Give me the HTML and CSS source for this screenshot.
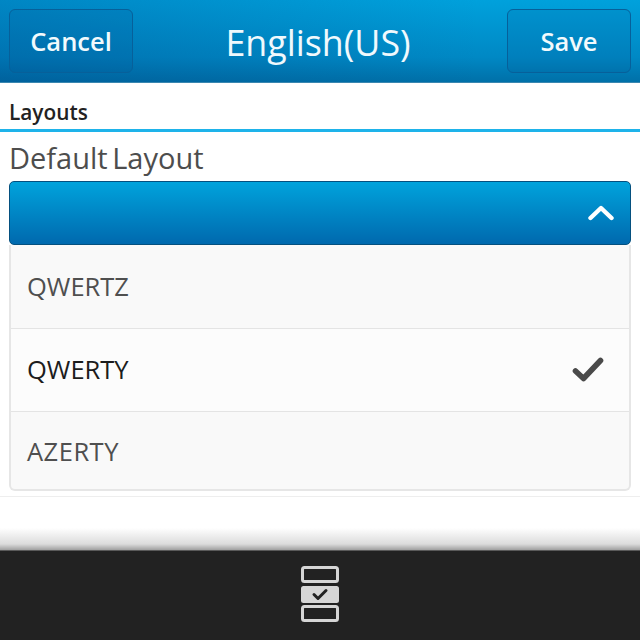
FILE: index.html
```html
<!DOCTYPE html>
<html lang="en">
<head>
<meta charset="utf-8">
<title>English(US)</title>
<link rel="stylesheet" href="styles.css">
</head>
<body>
<div class="screen">
  <header class="titlebar">
    <button class="tb-btn">Cancel</button>
    <h1 class="title">English(US)</h1>
    <button class="tb-btn">Save</button>
  </header>
  <main class="content">
    <div class="section-head">Layouts</div>
    <div class="field-label">Default Layout</div>
    <div class="dropdown-head">
      <svg class="chevron" width="26" height="16" viewBox="0 0 26 16"><path d="M2.5 13 L13 3 L23.5 13" fill="none" stroke="#fff" stroke-width="4.4" stroke-linecap="round" stroke-linejoin="round"/></svg>
    </div>
    <ul class="options">
      <li class="option first">QWERTZ</li>
      <li class="option selected">QWERTY
        <svg class="check" width="32" height="26" viewBox="0 0 32 26"><path d="M3.5 14 L11.5 21.5 L28.5 3.5" fill="none" stroke="#4a4a4a" stroke-width="5.6" stroke-linecap="round" stroke-linejoin="round"/></svg>
      </li>
      <li class="option last">AZERTY</li>
    </ul>
    <div class="rule"></div>
  </main>
  <footer class="actionbar">
    <svg class="list-icon" width="38" height="56" viewBox="0 0 38 56">
      <rect x="1.5" y="1.5" width="35" height="14" rx="2" fill="none" stroke="#d6d6d6" stroke-width="3"/>
      <rect x="0" y="20" width="38" height="17" rx="2.5" fill="#d6d6d6"/>
      <path d="M13 28.5 L17 32.5 L25 24.5" fill="none" stroke="#222" stroke-width="3" stroke-linecap="round" stroke-linejoin="round"/>
      <rect x="1.5" y="40.5" width="35" height="14" rx="2" fill="none" stroke="#d6d6d6" stroke-width="3"/>
    </svg>
  </footer>
</div>
</body>
</html>
```
FILE: styles.css
```css
* { box-sizing: border-box; }
html, body { margin: 0; padding: 0; }
body { font-family: "Open Sans", "Noto Sans", sans-serif; background: #fff; }
.screen { width: 640px; height: 640px; display: flex; flex-direction: column; overflow: hidden; background: #fff; }

.titlebar {
  height: 83px; flex: none; display: flex; align-items: flex-start; justify-content: space-between;
  padding: 9px 9px 0;
  background: linear-gradient(90deg, rgba(0,50,120,.24), rgba(0,50,120,0) 75%), linear-gradient(#00a1dc, #0088c4 70%, #0070a8);
  border-bottom: 1px solid #3a87b0;
}
.tb-btn {
  width: 124px; height: 64px; border: 1px solid #07609a; border-radius: 6px;
  background: rgba(0,75,140,.14); color: #f2fafd;
  font: 600 25.5px/1 "Open Sans", sans-serif; padding: 2px 0 0; text-align: center;
}
.title { margin: 4px 4px 0 0; font: 400 35.8px/58px "Open Sans", sans-serif; color: #f0f9fd; }

.content { flex: 1; min-height: 0; display: flex; flex-direction: column; background: linear-gradient(#fff 0, #fff 445px, #dcdcdc 461px, #a0a0a0 467px); }
.section-head {
  height: 49px; padding: 16px 0 0 9px; flex: none; color: #222;
  font: 600 20.8px/26px "Open Sans", sans-serif;
  border-bottom: 3px solid #1eb3ea;
}
.field-label { height: 49px; padding: 8px 0 0 9px; flex: none; color: #4d4d4d; font: 400 29px/36px "Open Sans", sans-serif; word-spacing: -3px; }
.dropdown-head {
  height: 64px; margin: 0 9px; flex: none; display: flex; align-items: center; justify-content: flex-end;
  padding-right: 16px; border: 1px solid #04507f; border-radius: 5px;
  background: linear-gradient(#00a3dc, #0069ae);
}
.options { list-style: none; margin: 0 9px; padding: 0; flex: none; border: 2px solid #e6e6e6; border-top: 0; border-radius: 0 0 6px 6px; background: #f9f9f9; }
.option {
  height: 83px; padding-left: 16px; padding-right: 25px; display: flex; align-items: center; justify-content: space-between;
  color: #4f4f4f; font: 400 25.5px/1 "Open Sans", sans-serif; border-bottom: 1px solid #e4e4e4;
}
.option.first { height: 84px; }
.option.last { border-bottom: 0; height: 77px; padding-top: 3px; letter-spacing: .5px; }
.option.selected { color: #1c1c1c; background: #fcfcfc; }
.rule { height: 1px; margin-top: 5px; flex: none; background: #eee; }

.actionbar {
  height: 90px; flex: none; display: flex; justify-content: center; align-items: flex-start; padding-top: 15px;
  background: #222; border-top: 1px solid #5a5a5a;
}
```
